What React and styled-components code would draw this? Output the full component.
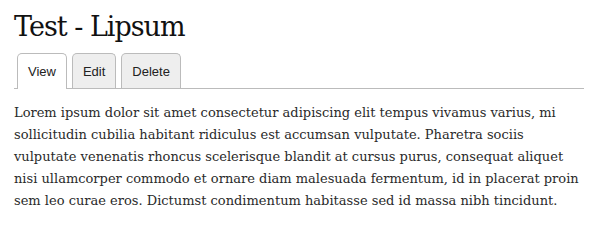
import React from 'react'
import styled, { createGlobalStyle } from 'styled-components'

const GlobalStyle = createGlobalStyle`
  html, body {
    margin: 0;
    padding: 0;
    background: #fff;
  }
`

const Page = styled.div`
  padding: 0 10px 0 14px;
  font-family: "DejaVu Serif", Georgia, serif;
  color: #333;
`

const Title = styled.h1`
  margin: 0;
  padding-top: 10px;
  font-size: 27px;
  font-weight: normal;
  line-height: 34px;
  letter-spacing: -1px;
  color: #111;
`

const Tabs = styled.ul`
  list-style: none;
  margin: 9px 0 0;
  padding: 0 0 0 3px;
  display: flex;
  gap: 5px;
  border-bottom: 1px solid #bbb;
`

const Tab = styled.li`
  margin: 0 0 ${p => (p.$active ? '-1px' : '0')};
  padding: 0 10px;
  height: ${p => (p.$active ? '35px' : '34px')};
  display: flex;
  align-items: center;
  border: 1px solid #bbb;
  border-bottom: none;
  border-radius: 5px 5px 0 0;
  background: ${p => (p.$active ? '#fff' : '#eee')};
  font-family: "Liberation Sans", Arial, sans-serif;
  font-size: 13px;
  color: #222;
  cursor: pointer;
`

const Body = styled.p`
  margin: 13px 0 0;
  font-size: 13px;
  line-height: 22px;
  color: #2a2a2a;
`

const tabs = ['View', 'Edit', 'Delete']

const App = () => {
  return (
    <Page>
      <GlobalStyle />
      <Title>Test - Lipsum</Title>
      <Tabs>
        {tabs.map((t, i) => (
          <Tab key={t} $active={i === 0}>{t}</Tab>
        ))}
      </Tabs>
      <Body>
        Lorem ipsum dolor sit amet consectetur adipiscing elit tempus vivamus varius, mi
        sollicitudin cubilia habitant ridiculus est accumsan vulputate. Pharetra sociis
        vulputate venenatis rhoncus scelerisque blandit at cursus purus, consequat aliquet
        nisi ullamcorper commodo et ornare diam malesuada fermentum, id in placerat proin
        sem leo curae eros. Dictumst condimentum habitasse sed id massa nibh tincidunt.
      </Body>
    </Page>
  )
}

export default App
